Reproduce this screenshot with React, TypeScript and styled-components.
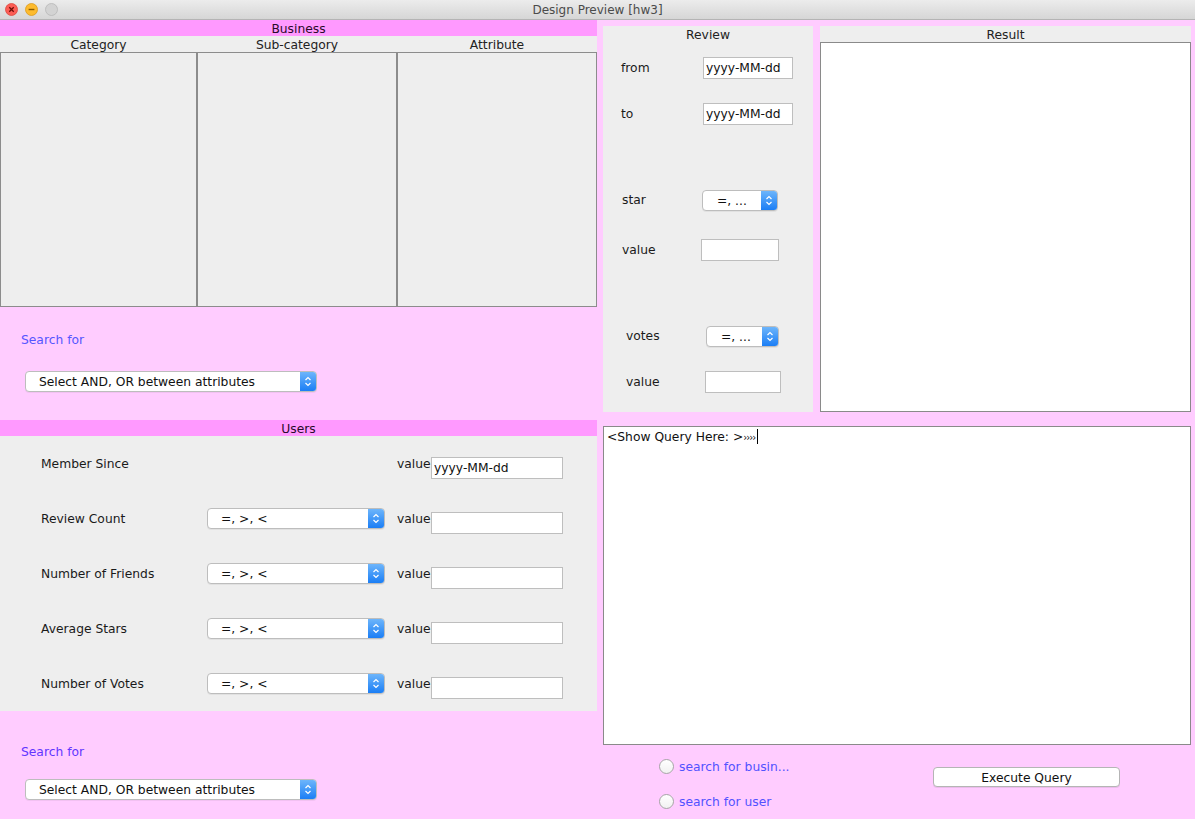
import React from 'react'
import styled, { createGlobalStyle } from 'styled-components'

const GlobalStyle = createGlobalStyle`
    html, body {
        margin: 0;
        padding: 0;
        background: #ffccff;
    }
    * {
        box-sizing: border-box;
    }
    body {
        font-family: 'DejaVu Sans', 'Noto Sans', sans-serif;
        font-size: 12.3px;
        color: #111;
    }
`

const Window = styled('div')`
    width: 1195px;
    height: 819px;
    overflow: hidden;
    background: #ffccff;
    display: flex;
    flex-direction: column;
`

const TitleBar = styled('div')`
    height: 20px;
    flex: none;
    position: relative;
    display: flex;
    align-items: center;
    justify-content: center;
    background: linear-gradient(#ececec, #d6d6d6);
    border-bottom: 1px solid #b4b4b4;
`

const Lights = styled('div')`
    position: absolute;
    left: 5px;
    top: 3px;
    display: flex;
    gap: 7px;
`

const Title = styled('span')`
    font-size: 12px;
    color: #4b4b4b;
`

const Body = styled('div')`
    flex: 1;
    display: grid;
    grid-template-columns: 597px 1fr;
`

const LeftColumn = styled('div')`
    display: flex;
    flex-direction: column;
`

const SectionHeader = styled('div')`
    height: 16px;
    line-height: 18px;
    overflow: hidden;
    background: #ff99ff;
    text-align: center;
    color: #2a0a2a;
`

const ListGrid = styled('div')`
    display: grid;
    grid-template-columns: 197px 200px 200px;
    grid-template-rows: 16px 255px;
    background: #eeeeee;
`

const ColumnTitle = styled('div')`
    line-height: 18px;
    overflow: hidden;
    text-align: center;
    color: #222;
`

const ListBox = styled('div')`
    border: 1px solid #8c8c8c;
    background: #eeeeee;
`

const SearchArea = styled('div')<{ $top: number; $gap: number; $height?: number }>`
    padding-top: ${(p) => p.$top}px;
    height: ${(p) => (p.$height ? `${p.$height}px` : 'auto')};
    flex: ${(p) => (p.$height ? 'none' : '1')};
    display: flex;
    flex-direction: column;
    gap: ${(p) => p.$gap}px;
`

const SearchLabel = styled('div')<{ $color: string }>`
    padding-left: 21px;
    line-height: 16px;
    color: ${(p) => p.$color};
`

const SelectWrap = styled('div')<{ $width: number; $left?: number }>`
    width: ${(p) => p.$width}px;
    margin-left: ${(p) => p.$left ?? 0}px;
    height: 21px;
    display: flex;
    border: 1px solid #bdbdbd;
    border-radius: 4px;
    background: #fff;
    overflow: hidden;
    box-shadow: 0 1px 0 rgba(0, 0, 0, 0.05);
`

const SelectText = styled('span')<{ $pad: number }>`
    flex: 1;
    padding-left: ${(p) => p.$pad}px;
    line-height: 20px;
    white-space: nowrap;
    color: #111;
`

const SelectArrow = styled('span')`
    width: 16px;
    flex: none;
    display: flex;
    align-items: center;
    justify-content: center;
    background: linear-gradient(#6db5fb, #1b7ef5);
`

const UsersPanel = styled('div')`
    height: 275px;
    background: #eeeeee;
    display: flex;
    flex-direction: column;
`

const UserRow = styled('div')`
    height: 55px;
    padding-left: 41px;
    display: grid;
    grid-template-columns: 166px 178px 46px 132px;
    align-items: center;
`

const RowLabel = styled('span')`
    color: #1a1a1a;
`

const ValueLabel = styled('span')`
    padding-left: 12px;
    margin-top: 1px;
    color: #1a1a1a;
`

const TextField = styled('div')<{ $width: number; $shift?: number }>`
    width: ${(p) => p.$width}px;
    height: 22px;
    margin-top: ${(p) => p.$shift ?? 0}px;
    background: #fff;
    border: 1px solid #bebebe;
    padding-left: 2px;
    line-height: 21px;
    color: #111;
    white-space: nowrap;
    overflow: hidden;
`

const RightColumn = styled('div')`
    padding: 6px 4px 0 6px;
    display: flex;
    flex-direction: column;
`

const TopRow = styled('div')`
    height: 386px;
    display: grid;
    grid-template-columns: 210px 371px;
    column-gap: 7px;
`

const ReviewPanel = styled('div')`
    background: #eeeeee;
    display: flex;
    flex-direction: column;
`

const PanelTitle = styled('div')`
    height: 16px;
    line-height: 18px;
    overflow: hidden;
    text-align: center;
    background: #eeeeee;
    color: #222;
`

const ReviewRow = styled('div')<{ $gap: number; $labelX: number; $controlX: number }>`
    margin-top: ${(p) => p.$gap}px;
    height: 22px;
    padding-left: ${(p) => p.$labelX}px;
    display: grid;
    grid-template-columns: ${(p) => p.$controlX - p.$labelX}px auto;
    align-items: center;
`

const ResultPanel = styled('div')`
    display: flex;
    flex-direction: column;
`

const ResultBox = styled('div')`
    flex: 1;
    background: #fff;
    border: 1px solid #8a8a8a;
`

const QueryBox = styled('div')`
    margin-top: 14px;
    height: 319px;
    background: #fff;
    border: 1px solid #8a8a8a;
    padding: 2px 3px;
    line-height: 16px;
    color: #111;
`

const Guillemets = styled('span')`
    font-size: 10px;
    letter-spacing: -1px;
`

const Caret = styled('span')`
    display: inline-block;
    width: 1px;
    height: 15px;
    background: #000;
    vertical-align: -3px;
    margin-left: 2px;
`

const BottomBar = styled('div')`
    display: grid;
    grid-template-columns: 330px 187px;
`

const RadioGroup = styled('div')`
    padding: 14px 0 0 56px;
    display: flex;
    flex-direction: column;
    gap: 20px;
`

const RadioItem = styled('label')`
    display: flex;
    align-items: center;
    gap: 5px;
    height: 15px;
    color: #5252ff;
`

const RadioCircle = styled('span')`
    width: 15px;
    height: 15px;
    border-radius: 50%;
    border: 1px solid #a6a6a6;
    background: linear-gradient(#ffffff, #f1f1f1);
    flex: none;
`

const Button = styled('div')`
    margin-top: 22px;
    height: 20px;
    line-height: 20px;
    text-align: center;
    background: #fff;
    border: 1px solid #b5b5b5;
    border-radius: 4px;
    box-shadow: 0 1px 0 rgba(0, 0, 0, 0.08);
    color: #111;
`

const Light = ({ fill, stroke, mark }: { fill: string; stroke: string; mark?: 'x' | '-' }) => (
    <svg width="13" height="13" viewBox="0 0 13 13">
        <circle cx="6.5" cy="6.5" r="6" fill={fill} stroke={stroke} strokeWidth="0.8" />
        {mark === 'x' && (
            <path d="M4.3 4.3 L8.7 8.7 M8.7 4.3 L4.3 8.7" stroke="#6b0c06" strokeWidth="1.3" />
        )}
        {mark === '-' && <path d="M3.6 6.5 H9.4" stroke="#8a5a00" strokeWidth="1.4" />}
    </svg>
)

const Chevrons = () => (
    <svg width="8" height="13" viewBox="0 0 8 13">
        <path d="M1.5 5 L4 2.5 L6.5 5 M1.5 8 L4 10.5 L6.5 8" fill="none" stroke="#fff" strokeWidth="1.2" />
    </svg>
)

type SelectProps = { text: string; width: number; pad?: number; left?: number }

const Select = ({ text, width, pad = 13, left }: SelectProps) => (
    <SelectWrap $width={width} $left={left}>
        <SelectText $pad={pad}>{text}</SelectText>
        <SelectArrow>
            <Chevrons />
        </SelectArrow>
    </SelectWrap>
)

const userRows = [
    { label: 'Member Since', select: false, value: 'yyyy-MM-dd' },
    { label: 'Review Count', select: true, value: '' },
    { label: 'Number of Friends', select: true, value: '' },
    { label: 'Average Stars', select: true, value: '' },
    { label: 'Number of Votes', select: true, value: '' },
]

const App = () => {
    return (
        <Window>
            <GlobalStyle />
            <TitleBar>
                <Lights>
                    <Light fill="#fc5d55" stroke="#de463e" mark="x" />
                    <Light fill="#fdbb2e" stroke="#dc9a1c" mark="-" />
                    <Light fill="#d3d3d3" stroke="#b8b8b8" />
                </Lights>
                <Title>Design Preview [hw3]</Title>
            </TitleBar>
            <Body>
                <LeftColumn>
                    <SectionHeader>Business</SectionHeader>
                    <ListGrid>
                        <ColumnTitle>Category</ColumnTitle>
                        <ColumnTitle>Sub-category</ColumnTitle>
                        <ColumnTitle>Attribute</ColumnTitle>
                        <ListBox />
                        <ListBox />
                        <ListBox />
                    </ListGrid>
                    <SearchArea $top={25} $gap={23} $height={113}>
                        <SearchLabel $color="#5656ff">Search for</SearchLabel>
                        <Select text="Select AND, OR between attributes" width={292} left={25} />
                    </SearchArea>
                    <SectionHeader>Users</SectionHeader>
                    <UsersPanel>
                        {userRows.map((row) => (
                            <UserRow key={row.label}>
                                <RowLabel>{row.label}</RowLabel>
                                {row.select ? <Select text="=, >, <" width={178} /> : <span />}
                                <ValueLabel>value</ValueLabel>
                                <TextField $width={132} $shift={9}>
                                    {row.value}
                                </TextField>
                            </UserRow>
                        ))}
                    </UsersPanel>
                    <SearchArea $top={33} $gap={19}>
                        <SearchLabel $color="#6236ff">Search for</SearchLabel>
                        <Select text="Select AND, OR between attributes" width={292} left={25} />
                    </SearchArea>
                </LeftColumn>
                <RightColumn>
                    <TopRow>
                        <ReviewPanel>
                            <PanelTitle>Review</PanelTitle>
                            <ReviewRow $gap={15} $labelX={18} $controlX={100}>
                                <RowLabel>from</RowLabel>
                                <TextField $width={90}>yyyy-MM-dd</TextField>
                            </ReviewRow>
                            <ReviewRow $gap={24} $labelX={18} $controlX={100}>
                                <RowLabel>to</RowLabel>
                                <TextField $width={90}>yyyy-MM-dd</TextField>
                            </ReviewRow>
                            <ReviewRow $gap={64} $labelX={19} $controlX={99}>
                                <RowLabel>star</RowLabel>
                                <Select text="=, ..." width={76} pad={14} />
                            </ReviewRow>
                            <ReviewRow $gap={28} $labelX={19} $controlX={98}>
                                <RowLabel>value</RowLabel>
                                <TextField $width={78} />
                            </ReviewRow>
                            <ReviewRow $gap={64} $labelX={23} $controlX={103}>
                                <RowLabel>votes</RowLabel>
                                <Select text="=, ..." width={73} pad={14} />
                            </ReviewRow>
                            <ReviewRow $gap={24} $labelX={23} $controlX={102}>
                                <RowLabel>value</RowLabel>
                                <TextField $width={76} />
                            </ReviewRow>
                        </ReviewPanel>
                        <ResultPanel>
                            <PanelTitle>Result</PanelTitle>
                            <ResultBox />
                        </ResultPanel>
                    </TopRow>
                    <QueryBox>
                        &lt;Show Query Here: &gt;<Guillemets>››››</Guillemets>
                        <Caret />
                    </QueryBox>
                    <BottomBar>
                        <RadioGroup>
                            <RadioItem>
                                <RadioCircle />
                                search for busin...
                            </RadioItem>
                            <RadioItem>
                                <RadioCircle />
                                search for user
                            </RadioItem>
                        </RadioGroup>
                        <Button>Execute Query</Button>
                    </BottomBar>
                </RightColumn>
            </Body>
        </Window>
    )
}

export default App
